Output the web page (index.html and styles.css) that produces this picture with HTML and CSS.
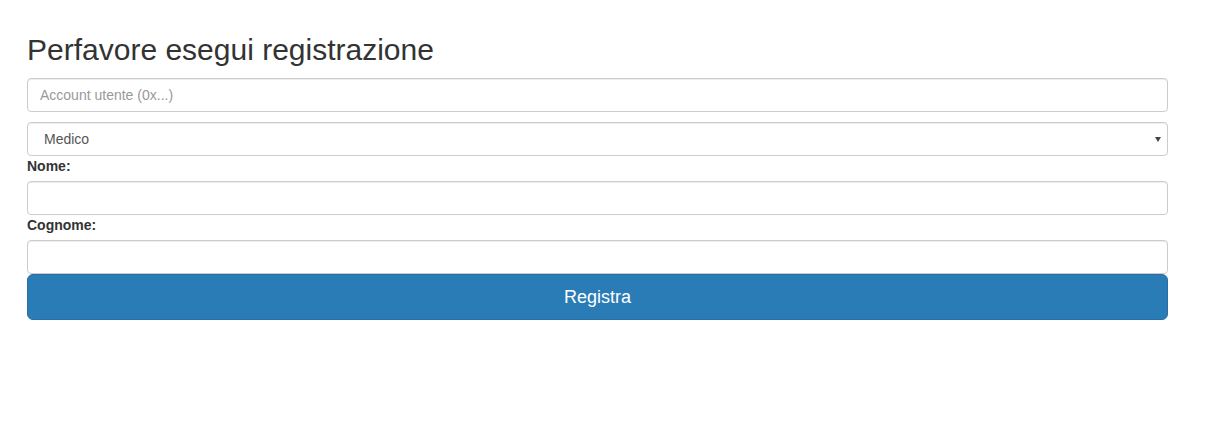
FILE: index.html
```html
<!DOCTYPE html>
<html lang="it">
<head>
<meta charset="utf-8">
<title>Registrazione</title>
<link rel="stylesheet" href="styles.css">
</head>
<body>
<div class="container">
  <h2 class="title">Perfavore esegui registrazione</h2>
  <form class="form">
    <input class="control spaced" type="text" placeholder="Account utente (0x...)">
    <div class="select-wrap">
      <select class="control select">
        <option>Medico</option>
        <option>Paziente</option>
      </select>
    </div>
    <label class="label">Nome:</label>
    <input class="control" type="text">
    <label class="label">Cognome:</label>
    <input class="control" type="text">
    <button class="btn" type="button">Registra</button>
  </form>
</div>
</body>
</html>
```
FILE: styles.css
```css
* { box-sizing: border-box; }
html, body {
  margin: 0;
  padding: 0;
  background: #fff;
  font-family: "Liberation Sans", Arial, Helvetica, sans-serif;
  font-size: 14px;
  line-height: 1.428571;
  color: #333;
}
.container {
  padding: 33px 49px 0 27px;
}
.title {
  margin: 0 0 12px 0;
  font-size: 30px;
  font-weight: 500;
  line-height: 1.1;
  color: #333;
}
.form {
  display: flex;
  flex-direction: column;
}
.control {
  display: block;
  width: 100%;
  height: 34px;
  padding: 6px 12px;
  font-family: inherit;
  font-size: 14px;
  line-height: 1.428571;
  color: #555;
  background: #fff;
  border: 1px solid #ccc;
  border-radius: 4px;
  box-shadow: inset 0 1px 1px rgba(0,0,0,.075);
  outline: none;
  margin: 0;
}
.control::placeholder { color: #999; }
.spaced { margin-bottom: 10px; }
.select-wrap { position: relative; }
.select {
  -webkit-appearance: none;
  appearance: none;
  padding-left: 16px;
  padding-top: 7px;
  padding-bottom: 5px;
}
.select-wrap::after {
  content: "";
  position: absolute;
  right: 7px;
  top: 15px;
  border-left: 3.5px solid transparent;
  border-right: 3.5px solid transparent;
  border-top: 5px solid #444;
  pointer-events: none;
}
.label {
  display: block;
  font-weight: bold;
  margin-bottom: 5px;
  line-height: 20px;
}
.btn {
  display: block;
  width: 100%;
  height: 46px;
  padding: 11px 16px 9px;
  font-family: inherit;
  font-size: 18px;
  line-height: 1.333;
  color: #fff;
  background: #2a7cb6;
  border: 1px solid #2a6ea6;
  border-radius: 6px;
  cursor: pointer;
}
```
